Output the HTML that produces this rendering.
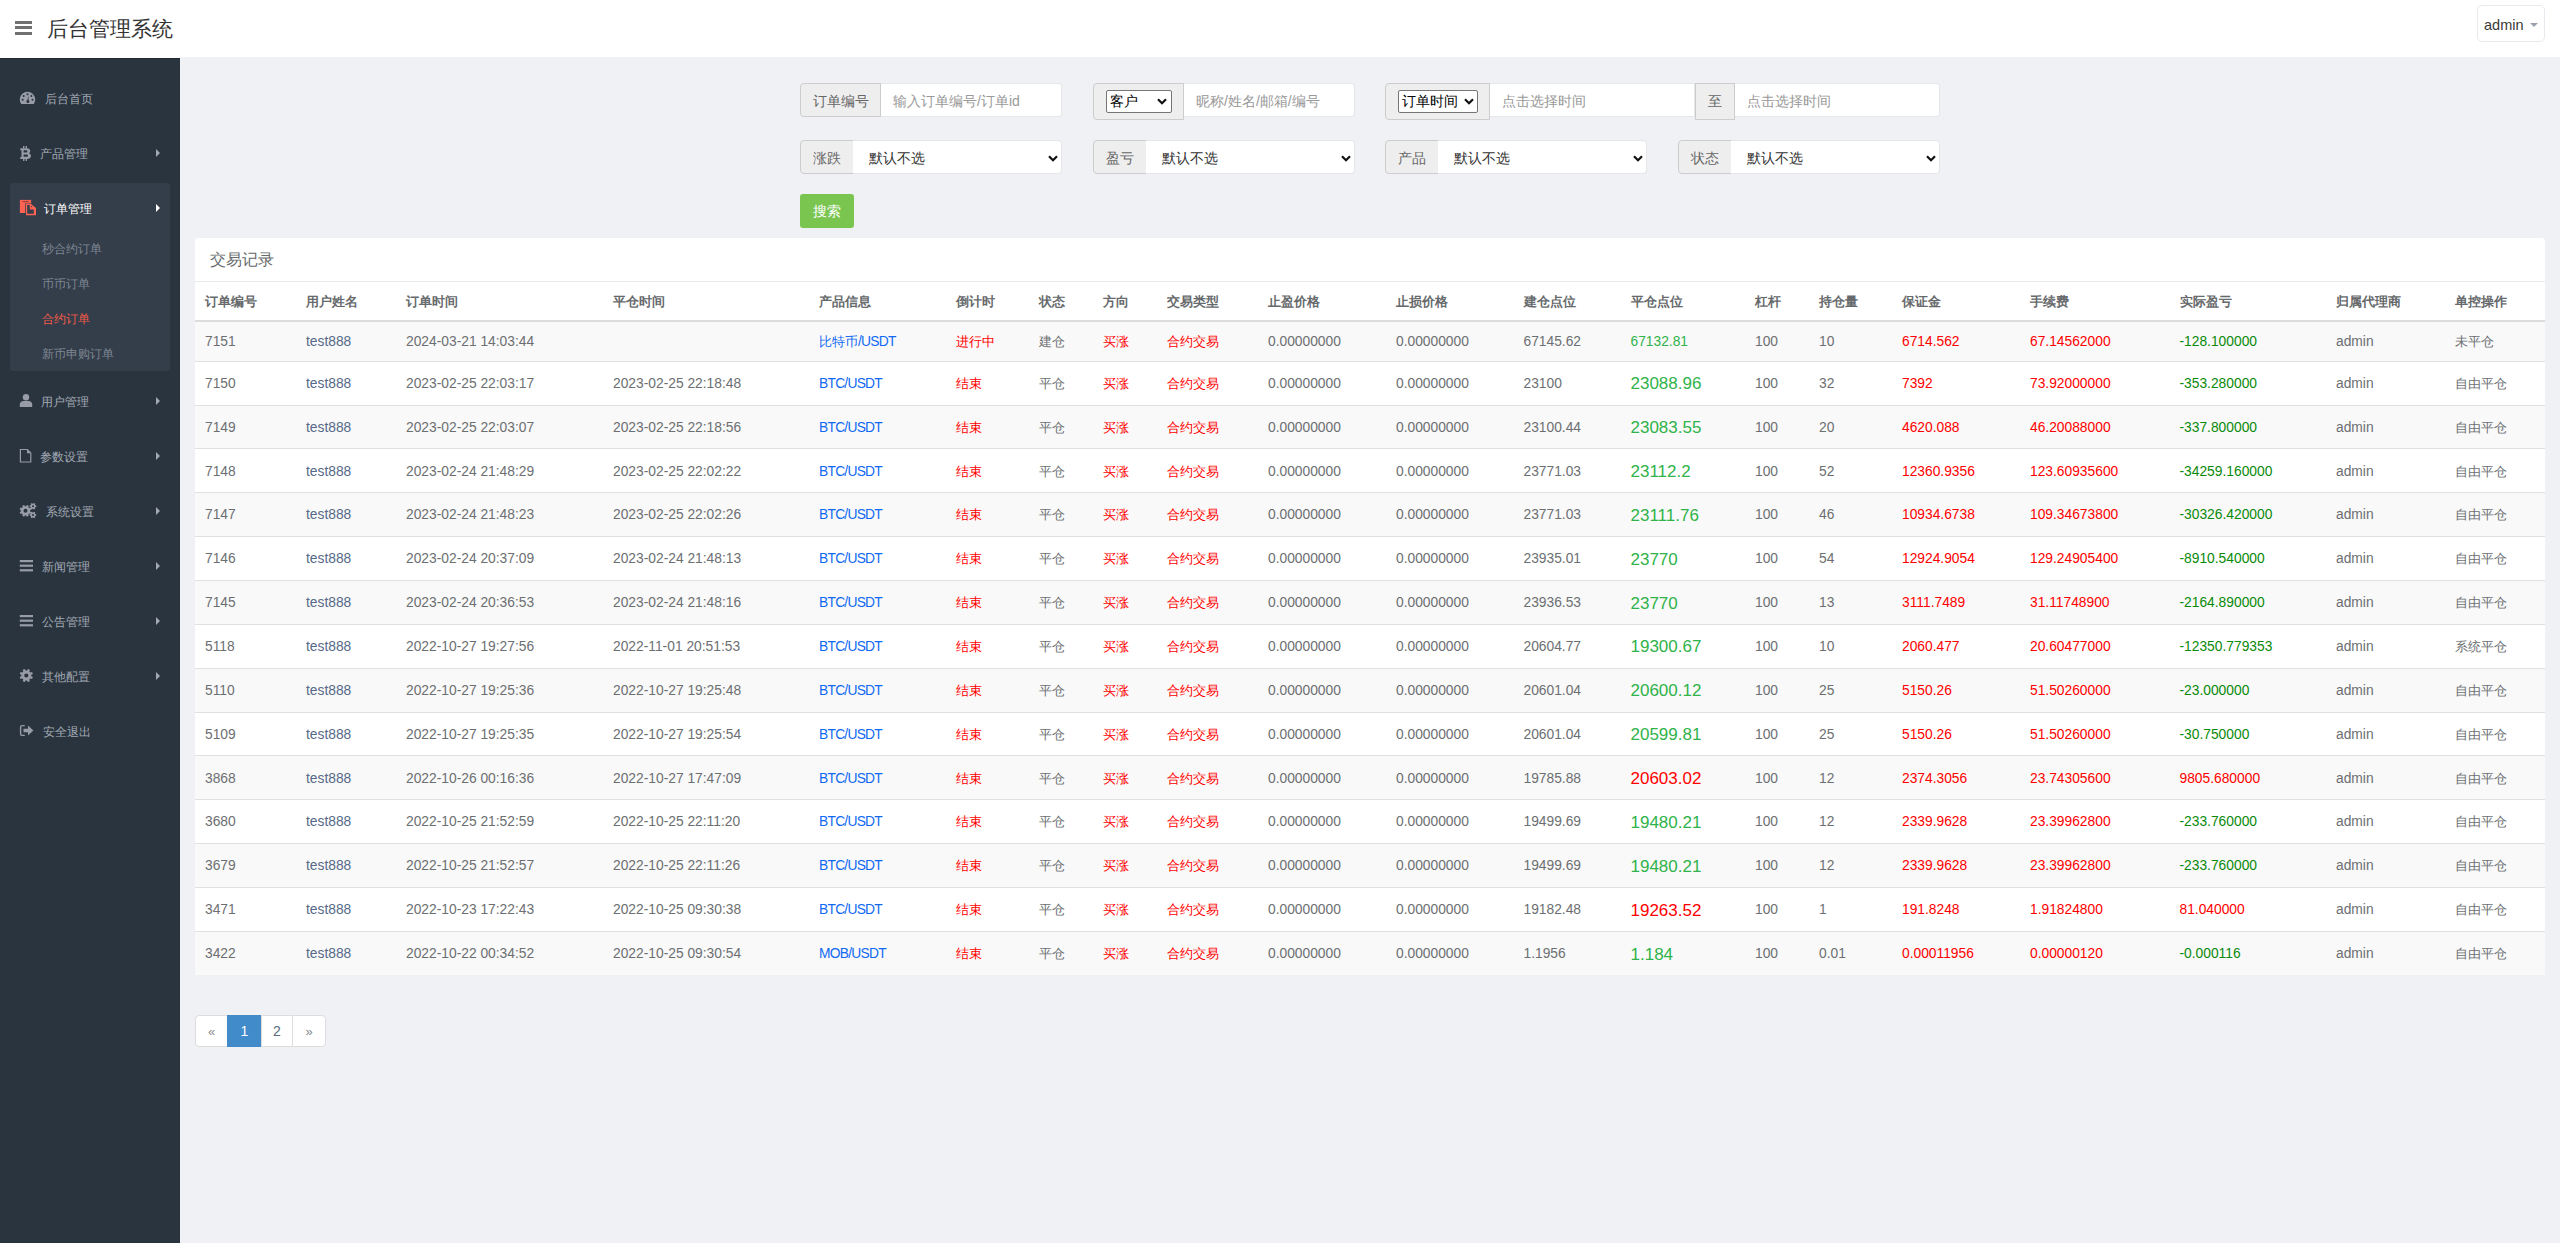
<!DOCTYPE html>
<html><head><meta charset="utf-8">
<style>
*{box-sizing:border-box;margin:0;padding:0}
html,body{width:2560px;height:1243px;overflow:hidden}
body{font-family:"Liberation Sans",sans-serif;background:#f0f1f5;color:#676a6c;font-size:13px;position:relative}
#hdr{position:absolute;left:0;top:0;width:2560px;height:57px;background:#fff}
#hstrip{position:absolute;left:0;top:57px;width:180px;height:1px;background:#fff}
#hdr .burger{position:absolute;left:15px;top:21px;width:17px;height:14px}
#hdr .title{position:absolute;left:47px;top:15px;font-size:21px;line-height:28px;color:#333;white-space:nowrap}
#hdr .user{position:absolute;left:2477px;top:5px;width:68px;height:37px;border:1px solid #e9e9f0;border-radius:5px}
#hdr .user span{position:absolute;left:6px;top:10px;font-size:14.5px;line-height:18px;color:#3a3a3a}
#hdr .user i{position:absolute;left:52px;top:17px;width:0;height:0;border-left:4px solid transparent;border-right:4px solid transparent;border-top:4px solid #9a9fae}
#side{position:absolute;left:0;top:58px;width:180px;height:1185px;background:#29343f}
#side .topline{position:absolute;left:0;top:0;width:180px;height:1px;background:#1f2833}
.nav{position:absolute;left:0;width:180px;height:20px;font-size:12px;line-height:20px;color:#a3a9b3;white-space:nowrap}
.nav .ic{position:absolute;left:20px;top:3px}
.nav .tx{position:absolute;top:1px}
.nav .ar{position:absolute;left:156px;top:6px;width:0;height:0;border-top:4px solid transparent;border-bottom:4px solid transparent;border-left:4px solid #a3a9b3}
#sub{position:absolute;left:10px;top:125px;width:160px;height:188px;background:#343e4b;border-radius:3px}
.sb{position:absolute;left:42px;font-size:12px;line-height:20px;color:#7e8692;white-space:nowrap}
#main{position:absolute;left:180px;top:58px;width:2380px;height:1185px}
.grp{position:absolute;height:34px}
.lab{position:absolute;top:0;height:34px;background:#eee;border:1px solid #ccc;border-radius:4px 0 0 4px;color:#666;font-size:14px;line-height:34px;text-align:center;white-space:nowrap}
.inp{position:absolute;top:0;height:34px;background:#fff;border:1px solid #e5e6e7;border-left:0;border-radius:0 4px 4px 0;color:#999;font-size:14px;line-height:34px;white-space:nowrap}
.sel{color:#333}
.chev{position:absolute;top:12px;width:10px;height:7px}
.mini{position:absolute;top:6px;height:23px;border:1px solid #767676;border-radius:2px;background:#fff;color:#000;font-size:14px;line-height:21px;white-space:nowrap}
.btn{position:absolute;left:620px;top:136px;width:54px;height:34px;background:#79c54f;border-radius:3px;color:#fff;font-size:14px;line-height:34px;text-align:center}
#panel{position:absolute;left:15px;top:180px;width:2350px;height:737px;background:#fff;border-radius:3px 3px 0 0}
#panel .ph{height:44px;border-bottom:1px solid #e7eaec;font-size:16px;line-height:44px;padding-left:15px;color:#676a6c}
table{border-collapse:collapse;table-layout:fixed;width:2350px}
th{font-weight:bold;text-align:left;padding:2px 0 0 10px;height:38.6px;line-height:18.6px;border-bottom:2px solid #dcdcdc;color:#676a6c;font-size:13px;white-space:nowrap}
td{padding:2px 0 0 10px;height:40.6px;line-height:18.6px;border-top:1px solid #e0e0e0;white-space:nowrap;color:#6c6f72;font-size:13.8px}
td.c,td .c{font-size:13px}
tbody tr:nth-child(odd){background:#f9f9f9}
tbody tr+tr td{height:43.86px}
td.u{color:#566a88}
td.bl{color:#1169f2;letter-spacing:-0.75px}
td.bl .c{letter-spacing:0}
td.cr{color:#f00}
td.cg{color:#2fb34a}
td.cdg{color:#0a8a0a}
td.big{font-size:17px;padding-top:3px}
#pg{position:absolute;left:15px;top:957px;height:32px}
#pg div{position:absolute;top:0;height:32px;border:1px solid #ddd;background:#fff;font-size:14px;line-height:30px;text-align:center;color:#676a6c}
</style></head><body>
<div id="hdr">
  <svg class="burger" viewBox="0 0 17 14"><rect x="0" y="0" width="17" height="3" fill="#717171"/><rect x="0" y="5" width="17" height="3" fill="#717171"/><rect x="0" y="11" width="17" height="3" fill="#717171"/></svg>
  <div class="title">后台管理系统</div>
  <div class="user"><span>admin</span><i></i></div>
</div>
<div id="hstrip"></div>
<div id="side">
  <div class="topline"></div>
  <div id="sub"></div>
<svg style="position:absolute;left:19px;top:33px" width="17" height="14" viewBox="0 0 17 14"><path d="M2.25 13 A7.7 7.7 0 1 1 14.75 13 Z" fill="#979ca6"/><circle cx="3.7" cy="8.8" r="1" fill="#29343f"/><circle cx="4.7" cy="4.9" r="1" fill="#29343f"/><circle cx="8.5" cy="3.2" r="1" fill="#29343f"/><circle cx="12.4" cy="4.9" r="1" fill="#29343f"/><circle cx="13.5" cy="8.8" r="1" fill="#29343f"/><path d="M8.1 10.6 L9.3 4.8 L9.6 10.6 Z" fill="#29343f"/><circle cx="8.85" cy="10.6" r="1.5" fill="#29343f"/></svg>
<svg style="position:absolute;left:20px;top:88px" width="12" height="15" viewBox="0 0 12 15"><path fill-rule="evenodd" fill="#979ca6" d="M0.3 2.2 H6.6 C9.1 2.2 10.2 3.4 10.2 5 C10.2 6.2 9.5 6.9 8.6 7.2 C10 7.5 11 8.5 11 10 C11 11.8 9.6 12.9 7.1 12.9 H0.3 V10.9 H1.5 V4.2 H0.3 Z M3.6 4.3 V6.5 H6.1 C6.9 6.5 7.4 6.1 7.4 5.4 C7.4 4.7 6.9 4.3 6.1 4.3 Z M3.6 8.5 V10.8 H6.5 C7.5 10.8 8 10.3 8 9.65 C8 9 7.5 8.5 6.5 8.5 Z"/><rect x="3" y="0" width="1.4" height="2.4" fill="#979ca6"/><rect x="5.6" y="0" width="1.4" height="2.4" fill="#979ca6"/><rect x="3" y="12.7" width="1.4" height="2.2" fill="#979ca6"/><rect x="5.6" y="12.7" width="1.4" height="2.2" fill="#979ca6"/></svg>
<svg style="position:absolute;left:16px;top:138px" width="24" height="24" viewBox="0 0 24 24"><rect x="3.9" y="3.9" width="11.2" height="13.1" fill="#fc6352"/><rect x="6.6" y="5.2" width="6.1" height="0.9" fill="#7a3a3a"/><path d="M9.3 7.4 H15.3 L20.7 11.7 V20 H9.3 Z" fill="#343e4b"/><path fill-rule="evenodd" fill="#fc6352" d="M10 8.1 H15.1 L20 12 V19.3 H10 Z M11.2 9.1 V17.7 H17.8 V13.5 H13.8 V9.1 Z"/><circle cx="15.6" cy="10.6" r="0.6" fill="#343e4b"/></svg>
<svg style="position:absolute;left:19px;top:335px" width="14" height="15" viewBox="0 0 14 15"><circle cx="7" cy="4.2" r="3.2" fill="#979ca6"/><path d="M0.8 14 V11.6 C0.8 9.4 2.4 8 4.4 8 H9.6 C11.6 8 13.2 9.4 13.2 11.6 V14 Z" fill="#979ca6"/></svg>
<svg style="position:absolute;left:19px;top:390px" width="13" height="15" viewBox="0 0 13 15"><path d="M1.4 1.5 H8.3 L11.8 5 V14 H1.4 Z" fill="none" stroke="#979ca6" stroke-width="1.2"/><path d="M8 1.5 V5.3 H11.8 Z" fill="#979ca6"/></svg>
<svg style="position:absolute;left:18px;top:444px" width="19" height="17" viewBox="0 0 19 17"><path fill-rule="evenodd" fill="#979ca6" d="M7.50 4.20 L8.09 4.24 L8.79 2.94 L10.73 3.75 L10.31 5.15 L10.75 5.55 L11.15 5.99 L12.55 5.57 L13.36 7.51 L12.06 8.21 L12.10 8.80 L12.06 9.39 L13.36 10.09 L12.55 12.03 L11.15 11.61 L10.75 12.05 L10.31 12.45 L10.73 13.85 L8.79 14.66 L8.09 13.36 L7.50 13.40 L6.91 13.36 L6.21 14.66 L4.27 13.85 L4.69 12.45 L4.25 12.05 L3.85 11.61 L2.45 12.03 L1.64 10.09 L2.94 9.39 L2.90 8.80 L2.94 8.21 L1.64 7.51 L2.45 5.57 L3.85 5.99 L4.25 5.55 L4.69 5.15 L4.27 3.75 L6.21 2.94 L6.91 4.24 Z M5.50 8.80 A2.0 2.0 0 1 0 9.50 8.80 A2.0 2.0 0 1 0 5.50 8.80 Z"/><path fill-rule="evenodd" fill="#979ca6" d="M15.00 1.70 L15.43 1.74 L15.97 0.94 L17.34 1.73 L16.92 2.60 L17.17 2.95 L17.35 3.34 L18.31 3.41 L18.31 4.99 L17.35 5.06 L17.17 5.45 L16.92 5.80 L17.34 6.67 L15.97 7.46 L15.43 6.66 L15.00 6.70 L14.57 6.66 L14.03 7.46 L12.66 6.67 L13.08 5.80 L12.83 5.45 L12.65 5.06 L11.69 4.99 L11.69 3.41 L12.65 3.34 L12.83 2.95 L13.08 2.60 L12.66 1.73 L14.03 0.94 L14.57 1.74 Z M14.00 4.20 A1.0 1.0 0 1 0 16.00 4.20 A1.0 1.0 0 1 0 14.00 4.20 Z"/><path fill-rule="evenodd" fill="#979ca6" d="M15.00 10.50 L15.43 10.54 L15.97 9.74 L17.34 10.53 L16.92 11.40 L17.17 11.75 L17.35 12.14 L18.31 12.21 L18.31 13.79 L17.35 13.86 L17.17 14.25 L16.92 14.60 L17.34 15.47 L15.97 16.26 L15.43 15.46 L15.00 15.50 L14.57 15.46 L14.03 16.26 L12.66 15.47 L13.08 14.60 L12.83 14.25 L12.65 13.86 L11.69 13.79 L11.69 12.21 L12.65 12.14 L12.83 11.75 L13.08 11.40 L12.66 10.53 L14.03 9.74 L14.57 10.54 Z M14.00 13.00 A1.0 1.0 0 1 0 16.00 13.00 A1.0 1.0 0 1 0 14.00 13.00 Z"/></svg>
<svg style="position:absolute;left:19px;top:502px" width="14" height="12" viewBox="0 0 14 12"><rect x="0.8" y="0" width="13.2" height="2.2" fill="#979ca6"/><rect x="0.8" y="4.6" width="13.2" height="2.2" fill="#979ca6"/><rect x="0.8" y="9.2" width="13.2" height="2.2" fill="#979ca6"/></svg>
<svg style="position:absolute;left:19px;top:557px" width="14" height="12" viewBox="0 0 14 12"><rect x="0.8" y="0" width="13.2" height="2.2" fill="#979ca6"/><rect x="0.8" y="4.6" width="13.2" height="2.2" fill="#979ca6"/><rect x="0.8" y="9.2" width="13.2" height="2.2" fill="#979ca6"/></svg>
<svg style="position:absolute;left:19px;top:610px" width="15" height="15" viewBox="0 0 15 15"><path fill-rule="evenodd" fill="#979ca6" d="M7.30 2.50 L7.98 2.55 L8.84 0.88 L10.90 1.73 L10.32 3.52 L10.84 3.96 L11.28 4.48 L13.07 3.90 L13.92 5.96 L12.25 6.82 L12.30 7.50 L12.25 8.18 L13.92 9.04 L13.07 11.10 L11.28 10.52 L10.84 11.04 L10.32 11.48 L10.90 13.27 L8.84 14.12 L7.98 12.45 L7.30 12.50 L6.62 12.45 L5.76 14.12 L3.70 13.27 L4.28 11.48 L3.76 11.04 L3.32 10.52 L1.53 11.10 L0.68 9.04 L2.35 8.18 L2.30 7.50 L2.35 6.82 L0.68 5.96 L1.53 3.90 L3.32 4.48 L3.76 3.96 L4.28 3.52 L3.70 1.73 L5.76 0.88 L6.62 2.55 Z M5.20 7.50 A2.1 2.1 0 1 0 9.40 7.50 A2.1 2.1 0 1 0 5.20 7.50 Z"/></svg>
<svg style="position:absolute;left:19px;top:666px" width="15" height="13" viewBox="0 0 15 13"><path d="M5.8 1.6 H3 C2 1.6 1.6 2.2 1.6 3 V10 C1.6 10.8 2 11.4 3 11.4 H5.8" fill="none" stroke="#979ca6" stroke-width="1.4"/><path d="M4.5 4.8 H9 V1.4 L14.4 6.5 L9 11.6 V8.2 H4.5 Z" fill="#979ca6"/></svg>
  <div class="nav" style="top:30px"><span class="tx" style="left:45px">后台首页</span></div>
  <div class="nav" style="top:85px"><span class="tx" style="left:40px">产品管理</span><i class="ar"></i></div>
  <div class="nav" style="top:140px;color:#fff"><span class="tx" style="left:44px">订单管理</span><i class="ar" style="border-left-color:#fff"></i></div>
  <div class="sb" style="top:181px">秒合约订单</div>
  <div class="sb" style="top:216px">币币订单</div>
  <div class="sb" style="top:251px;color:#f25a48">合约订单</div>
  <div class="sb" style="top:286px">新币申购订单</div>
  <div class="nav" style="top:333px"><span class="tx" style="left:41px">用户管理</span><i class="ar"></i></div>
  <div class="nav" style="top:388px"><span class="tx" style="left:40px">参数设置</span><i class="ar"></i></div>
  <div class="nav" style="top:443px"><span class="tx" style="left:46px">系统设置</span><i class="ar"></i></div>
  <div class="nav" style="top:498px"><span class="tx" style="left:42px">新闻管理</span><i class="ar"></i></div>
  <div class="nav" style="top:553px"><span class="tx" style="left:42px">公告管理</span><i class="ar"></i></div>
  <div class="nav" style="top:608px"><span class="tx" style="left:42px">其他配置</span><i class="ar"></i></div>
  <div class="nav" style="top:663px"><span class="tx" style="left:43px">安全退出</span></div>
</div>
<div id="main">
  <div class="grp" style="left:620px;top:25px">
    <div class="lab" style="left:0;width:81px">订单编号</div>
    <div class="inp" style="left:81px;width:181px;padding-left:12px">输入订单编号/订单id</div>
  </div>
  <div class="grp" style="left:913px;top:25px">
    <div class="lab" style="left:0;width:91px;height:37px"><div class="mini" style="left:12px;width:66px;text-align:left;padding-left:3px">客户<svg class="chev" style="left:50px;top:7px" width="10" height="7" viewBox="0 0 10 7"><path d="M1 1.2L5 5.2L9 1.2" fill="none" stroke="#111" stroke-width="2.2"/></svg></div></div>
    <div class="inp" style="left:91px;width:171px;padding-left:12px">昵称/姓名/邮箱/编号</div>
  </div>
  <div class="grp" style="left:1205px;top:25px">
    <div class="lab" style="left:0;width:105px;height:37px"><div class="mini" style="left:12px;width:80px;text-align:left;padding-left:3px">订单时间<svg class="chev" style="left:65px;top:7px" width="10" height="7" viewBox="0 0 10 7"><path d="M1 1.2L5 5.2L9 1.2" fill="none" stroke="#111" stroke-width="2.2"/></svg></div></div>
    <div class="inp" style="left:105px;width:205px;padding-left:12px;border-radius:0">点击选择时间</div>
    <div class="lab" style="left:310px;width:40px;height:37px;border-radius:0">至</div>
    <div class="inp" style="left:350px;width:205px;padding-left:12px">点击选择时间</div>
  </div>
  <div class="grp" style="left:620px;top:82px">
    <div class="lab" style="left:0;width:54px">涨跌</div>
    <div class="inp sel" style="left:53px;width:209px;padding-left:16px">默认不选<svg class="chev" style="left:195px;top:14px" width="10" height="7" viewBox="0 0 10 7"><path d="M1 1.2L5 5.2L9 1.2" fill="none" stroke="#111" stroke-width="2.2"/></svg></div>
  </div>
  <div class="grp" style="left:913px;top:82px">
    <div class="lab" style="left:0;width:54px">盈亏</div>
    <div class="inp sel" style="left:53px;width:209px;padding-left:16px">默认不选<svg class="chev" style="left:195px;top:14px" width="10" height="7" viewBox="0 0 10 7"><path d="M1 1.2L5 5.2L9 1.2" fill="none" stroke="#111" stroke-width="2.2"/></svg></div>
  </div>
  <div class="grp" style="left:1205px;top:82px">
    <div class="lab" style="left:0;width:54px">产品</div>
    <div class="inp sel" style="left:53px;width:209px;padding-left:16px">默认不选<svg class="chev" style="left:195px;top:14px" width="10" height="7" viewBox="0 0 10 7"><path d="M1 1.2L5 5.2L9 1.2" fill="none" stroke="#111" stroke-width="2.2"/></svg></div>
  </div>
  <div class="grp" style="left:1498px;top:82px">
    <div class="lab" style="left:0;width:54px">状态</div>
    <div class="inp sel" style="left:53px;width:209px;padding-left:16px">默认不选<svg class="chev" style="left:195px;top:14px" width="10" height="7" viewBox="0 0 10 7"><path d="M1 1.2L5 5.2L9 1.2" fill="none" stroke="#111" stroke-width="2.2"/></svg></div>
  </div>
  <div class="btn">搜索</div>
  <div id="panel">
    <div class="ph">交易记录</div>
    <table>
<colgroup><col style="width:101px"><col style="width:100px"><col style="width:207px"><col style="width:206px"><col style="width:137px"><col style="width:83px"><col style="width:64px"><col style="width:64px"><col style="width:101px"><col style="width:128px"><col style="width:127.5px"><col style="width:107.0px"><col style="width:124.5px"><col style="width:64px"><col style="width:83px"><col style="width:128px"><col style="width:149.5px"><col style="width:156.5px"><col style="width:118.5px"><col style="width:100.5px"></colgroup>
<thead><tr><th>订单编号</th><th>用户姓名</th><th>订单时间</th><th>平仓时间</th><th>产品信息</th><th>倒计时</th><th>状态</th><th>方向</th><th>交易类型</th><th>止盈价格</th><th>止损价格</th><th>建仓点位</th><th>平仓点位</th><th>杠杆</th><th>持仓量</th><th>保证金</th><th>手续费</th><th>实际盈亏</th><th>归属代理商</th><th>单控操作</th></tr></thead><tbody>
<tr class="first"><td>7151</td><td class="u">test888</td><td>2024-03-21 14:03:44</td><td></td><td class="bl"><span class="c">比特币</span>/USDT</td><td class="cr c">进行中</td><td class="c">建仓</td><td class="cr c">买涨</td><td class="cr c">合约交易</td><td>0.00000000</td><td>0.00000000</td><td>67145.62</td><td class="cg">67132.81</td><td>100</td><td>10</td><td class="cr">6714.562</td><td class="cr">67.14562000</td><td class="cdg">-128.100000</td><td>admin</td><td class="c">未平仓</td></tr>
<tr><td>7150</td><td class="u">test888</td><td>2023-02-25 22:03:17</td><td>2023-02-25 22:18:48</td><td class="bl">BTC/USDT</td><td class="cr c">结束</td><td class="c">平仓</td><td class="cr c">买涨</td><td class="cr c">合约交易</td><td>0.00000000</td><td>0.00000000</td><td>23100</td><td class="cg big">23088.96</td><td>100</td><td>32</td><td class="cr">7392</td><td class="cr">73.92000000</td><td class="cdg">-353.280000</td><td>admin</td><td class="c">自由平仓</td></tr>
<tr><td>7149</td><td class="u">test888</td><td>2023-02-25 22:03:07</td><td>2023-02-25 22:18:56</td><td class="bl">BTC/USDT</td><td class="cr c">结束</td><td class="c">平仓</td><td class="cr c">买涨</td><td class="cr c">合约交易</td><td>0.00000000</td><td>0.00000000</td><td>23100.44</td><td class="cg big">23083.55</td><td>100</td><td>20</td><td class="cr">4620.088</td><td class="cr">46.20088000</td><td class="cdg">-337.800000</td><td>admin</td><td class="c">自由平仓</td></tr>
<tr><td>7148</td><td class="u">test888</td><td>2023-02-24 21:48:29</td><td>2023-02-25 22:02:22</td><td class="bl">BTC/USDT</td><td class="cr c">结束</td><td class="c">平仓</td><td class="cr c">买涨</td><td class="cr c">合约交易</td><td>0.00000000</td><td>0.00000000</td><td>23771.03</td><td class="cg big">23112.2</td><td>100</td><td>52</td><td class="cr">12360.9356</td><td class="cr">123.60935600</td><td class="cdg">-34259.160000</td><td>admin</td><td class="c">自由平仓</td></tr>
<tr><td>7147</td><td class="u">test888</td><td>2023-02-24 21:48:23</td><td>2023-02-25 22:02:26</td><td class="bl">BTC/USDT</td><td class="cr c">结束</td><td class="c">平仓</td><td class="cr c">买涨</td><td class="cr c">合约交易</td><td>0.00000000</td><td>0.00000000</td><td>23771.03</td><td class="cg big">23111.76</td><td>100</td><td>46</td><td class="cr">10934.6738</td><td class="cr">109.34673800</td><td class="cdg">-30326.420000</td><td>admin</td><td class="c">自由平仓</td></tr>
<tr><td>7146</td><td class="u">test888</td><td>2023-02-24 20:37:09</td><td>2023-02-24 21:48:13</td><td class="bl">BTC/USDT</td><td class="cr c">结束</td><td class="c">平仓</td><td class="cr c">买涨</td><td class="cr c">合约交易</td><td>0.00000000</td><td>0.00000000</td><td>23935.01</td><td class="cg big">23770</td><td>100</td><td>54</td><td class="cr">12924.9054</td><td class="cr">129.24905400</td><td class="cdg">-8910.540000</td><td>admin</td><td class="c">自由平仓</td></tr>
<tr><td>7145</td><td class="u">test888</td><td>2023-02-24 20:36:53</td><td>2023-02-24 21:48:16</td><td class="bl">BTC/USDT</td><td class="cr c">结束</td><td class="c">平仓</td><td class="cr c">买涨</td><td class="cr c">合约交易</td><td>0.00000000</td><td>0.00000000</td><td>23936.53</td><td class="cg big">23770</td><td>100</td><td>13</td><td class="cr">3111.7489</td><td class="cr">31.11748900</td><td class="cdg">-2164.890000</td><td>admin</td><td class="c">自由平仓</td></tr>
<tr><td>5118</td><td class="u">test888</td><td>2022-10-27 19:27:56</td><td>2022-11-01 20:51:53</td><td class="bl">BTC/USDT</td><td class="cr c">结束</td><td class="c">平仓</td><td class="cr c">买涨</td><td class="cr c">合约交易</td><td>0.00000000</td><td>0.00000000</td><td>20604.77</td><td class="cg big">19300.67</td><td>100</td><td>10</td><td class="cr">2060.477</td><td class="cr">20.60477000</td><td class="cdg">-12350.779353</td><td>admin</td><td class="c">系统平仓</td></tr>
<tr><td>5110</td><td class="u">test888</td><td>2022-10-27 19:25:36</td><td>2022-10-27 19:25:48</td><td class="bl">BTC/USDT</td><td class="cr c">结束</td><td class="c">平仓</td><td class="cr c">买涨</td><td class="cr c">合约交易</td><td>0.00000000</td><td>0.00000000</td><td>20601.04</td><td class="cg big">20600.12</td><td>100</td><td>25</td><td class="cr">5150.26</td><td class="cr">51.50260000</td><td class="cdg">-23.000000</td><td>admin</td><td class="c">自由平仓</td></tr>
<tr><td>5109</td><td class="u">test888</td><td>2022-10-27 19:25:35</td><td>2022-10-27 19:25:54</td><td class="bl">BTC/USDT</td><td class="cr c">结束</td><td class="c">平仓</td><td class="cr c">买涨</td><td class="cr c">合约交易</td><td>0.00000000</td><td>0.00000000</td><td>20601.04</td><td class="cg big">20599.81</td><td>100</td><td>25</td><td class="cr">5150.26</td><td class="cr">51.50260000</td><td class="cdg">-30.750000</td><td>admin</td><td class="c">自由平仓</td></tr>
<tr><td>3868</td><td class="u">test888</td><td>2022-10-26 00:16:36</td><td>2022-10-27 17:47:09</td><td class="bl">BTC/USDT</td><td class="cr c">结束</td><td class="c">平仓</td><td class="cr c">买涨</td><td class="cr c">合约交易</td><td>0.00000000</td><td>0.00000000</td><td>19785.88</td><td class="cr big">20603.02</td><td>100</td><td>12</td><td class="cr">2374.3056</td><td class="cr">23.74305600</td><td class="cr">9805.680000</td><td>admin</td><td class="c">自由平仓</td></tr>
<tr><td>3680</td><td class="u">test888</td><td>2022-10-25 21:52:59</td><td>2022-10-25 22:11:20</td><td class="bl">BTC/USDT</td><td class="cr c">结束</td><td class="c">平仓</td><td class="cr c">买涨</td><td class="cr c">合约交易</td><td>0.00000000</td><td>0.00000000</td><td>19499.69</td><td class="cg big">19480.21</td><td>100</td><td>12</td><td class="cr">2339.9628</td><td class="cr">23.39962800</td><td class="cdg">-233.760000</td><td>admin</td><td class="c">自由平仓</td></tr>
<tr><td>3679</td><td class="u">test888</td><td>2022-10-25 21:52:57</td><td>2022-10-25 22:11:26</td><td class="bl">BTC/USDT</td><td class="cr c">结束</td><td class="c">平仓</td><td class="cr c">买涨</td><td class="cr c">合约交易</td><td>0.00000000</td><td>0.00000000</td><td>19499.69</td><td class="cg big">19480.21</td><td>100</td><td>12</td><td class="cr">2339.9628</td><td class="cr">23.39962800</td><td class="cdg">-233.760000</td><td>admin</td><td class="c">自由平仓</td></tr>
<tr><td>3471</td><td class="u">test888</td><td>2022-10-23 17:22:43</td><td>2022-10-25 09:30:38</td><td class="bl">BTC/USDT</td><td class="cr c">结束</td><td class="c">平仓</td><td class="cr c">买涨</td><td class="cr c">合约交易</td><td>0.00000000</td><td>0.00000000</td><td>19182.48</td><td class="cr big">19263.52</td><td>100</td><td>1</td><td class="cr">191.8248</td><td class="cr">1.91824800</td><td class="cr">81.040000</td><td>admin</td><td class="c">自由平仓</td></tr>
<tr><td>3422</td><td class="u">test888</td><td>2022-10-22 00:34:52</td><td>2022-10-25 09:30:54</td><td class="bl">MOB/USDT</td><td class="cr c">结束</td><td class="c">平仓</td><td class="cr c">买涨</td><td class="cr c">合约交易</td><td>0.00000000</td><td>0.00000000</td><td>1.1956</td><td class="cg big">1.184</td><td>100</td><td>0.01</td><td class="cr">0.00011956</td><td class="cr">0.00000120</td><td class="cdg">-0.000116</td><td>admin</td><td class="c">自由平仓</td></tr>
</tbody>
    </table>
  </div>
  <div id="pg">
    <div style="left:0;width:33px;border-radius:4px 0 0 4px;color:#8a8d90;font-size:13px;line-height:32px">&laquo;</div>
    <div style="left:32px;width:35px;background:#428bca;border-color:#428bca;color:#fff">1</div>
    <div style="left:66px;width:32px;color:#5a6b82">2</div>
    <div style="left:97px;width:34px;border-radius:0 4px 4px 0;color:#8a8d90;font-size:13px;line-height:32px">&raquo;</div>
  </div>
</div>
</body></html>
